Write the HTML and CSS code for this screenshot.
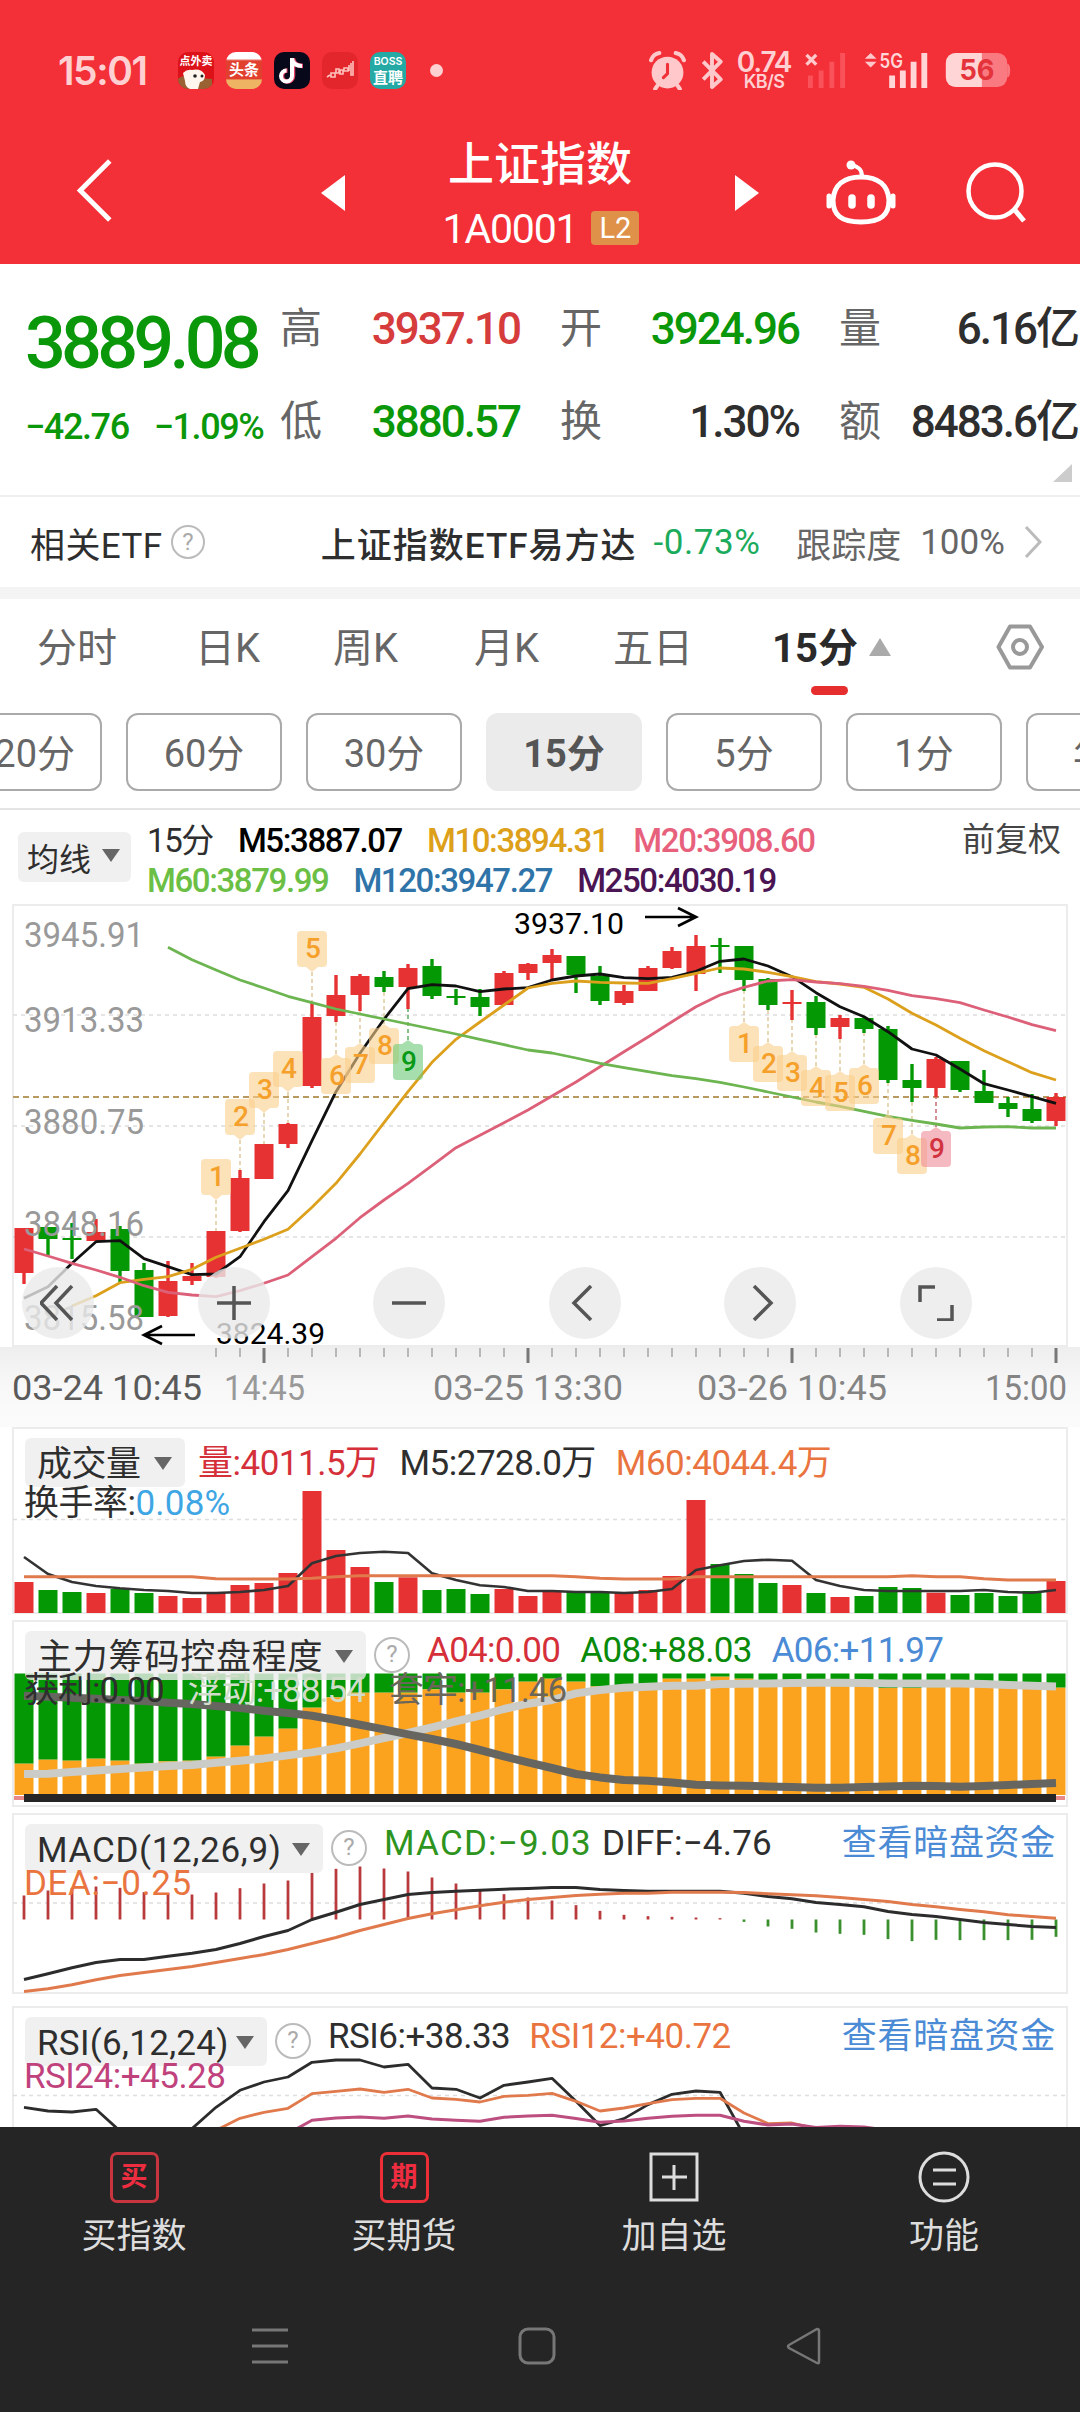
FILE: index.html
```html
<!DOCTYPE html>
<html lang="zh-CN">
<head>
    <meta charset="UTF-8">
    <meta name="viewport" content="width=device-width, initial-scale=1.0">
    <title>上证指数 1A0001</title>
    <link rel="stylesheet" href="styles.css">
</head>
<body>
    <header class="top">
        <div class="status">
            <div class="status-left">
                <span class="clock">15:01</span>
                <span class="app app-food"><b>点外卖</b><svg viewBox="0 0 36 22"><path d="M0 22V12q4-4 8-2l26 2v10z" fill="#9a6232"/><path d="M5 6q4-4 9-3 9-2 13 5 0 6-5 7l-2 7h-8q-5-2-5-8z" fill="#fff6ee"/><circle cx="17" cy="9" r="1.800" fill="#222"/><circle cx="24" cy="9" r="1.500" fill="#222"/></svg></span>
                <span class="app app-news"><b>头条</b></span>
                <span class="app app-tok"><svg viewBox="0 0 36 36"><path d="M19 6v18a5.500 5.500 0 1 1-5.500-5.500M19 7c1 5 5 7 10 7" fill="none" stroke="#e9436a" stroke-width="4.500"/><path d="M18 6v18a5.500 5.500 0 1 1-5.500-5.500M18 7c1 5 5 7 10 7" fill="none" stroke="#fff" stroke-width="4"/></svg></span>
                <span class="app app-line"><svg viewBox="0 0 36 36"><path d="M5 25l3-2M9 21h4v4H9zM14 17h3v4h-3zM18 18h3v4h-3zM22 16h4v3h-4zM27 13v6M31 9v14h-2V11" fill="none" stroke="#ffc2bd" stroke-width="1.600"/></svg></span>
                <span class="app app-boss"><b>BOSS</b><b class="zh">直聘</b></span>
                <span class="dot"></span>
            </div>
            <div class="status-right">
                <svg class="alarm" viewBox="0 0 36 38"><circle cx="18" cy="21" r="15.500" fill="#ffc9cb"/><path d="M2 9Q4 3 10 2M34 9Q32 3 26 2M8 34l-2 3M28 34l2 3" stroke="#ffc9cb" stroke-width="4" fill="none" stroke-linecap="round"/><path d="M18 13v9l-4 4" stroke="#f12f39" stroke-width="3" fill="none" stroke-linecap="round"/></svg>
                <svg class="bt" viewBox="0 0 24 40"><path d="M3 11l18 18-9 8V3l9 8L3 29" fill="none" stroke="#ffc9cb" stroke-width="4" stroke-linejoin="round"/></svg>
                <span class="speed"><b>0.74</b><small>KB/S</small></span>
                <svg class="sig" viewBox="0 0 44 40"><path d="M2 4l10 10M12 4L2 14" stroke="#ffc9cb" stroke-width="3.500"/><path d="M6 38V25M17 38V20M28 38V11M39 38V2" stroke="#f9525a" stroke-width="5"/></svg>
                <svg class="sig5" viewBox="0 0 66 40"><path d="M0 8l6-6 6 6zM0 11l6 6 6-6z" fill="#ffc9cb"/><text x="15" y="17" textLength="24" lengthAdjust="spacingAndGlyphs">5G</text><path d="M28 38V25M39 38V20M50 38V11M61 38V2" stroke="#ffd5d6" stroke-width="6"/></svg>
                <svg class="bat" viewBox="0 0 66 38"><rect y="1" width="63" height="35" rx="10" fill="#f97b81"/><path d="M10 1h27v35H10A10 10 0 0 1 0 26V11A10 10 0 0 1 10 1z" fill="#ffd5d6"/><path d="M63 12q3 0 3 7t-3 7z" fill="#f97b81"/><text x="14" y="29" textLength="36" lengthAdjust="spacingAndGlyphs">56</text></svg>
            </div>
        </div>
        <div class="title-bar">
            <svg class="back" viewBox="0 0 38 66"><path d="M34 3L4 33l30 30" fill="none" stroke="#fff" stroke-width="5"/></svg>
            <svg class="prev" viewBox="0 0 24 36"><path d="M24 0v36L0 18z" fill="#fff"/></svg>
            <div class="title">
                <h1>上证指数</h1>
                <div class="code"><span>1A0001</span><em>L2</em></div>
            </div>
            <svg class="next" viewBox="0 0 24 36"><path d="M0 0v36l24-18z" fill="#fff"/></svg>
            <svg class="robot" viewBox="0 0 70 66"><g fill="none" stroke="#fff" stroke-width="5"><path d="M35 17c18 0 27 9 28 23 0 15-8 22-28 22S7 55 7 40c1-14 10-23 28-23z"/><path d="M36 16c0-7-4-9-10-11" stroke-width="4"/><path d="M3 36v10M67 36v10" stroke-linecap="round"/><path d="M26 38v7M45 38v7" stroke-width="7.500" stroke-linecap="round"/></g><circle cx="25" cy="5" r="4.500" fill="#fff"/></svg>
            <svg class="search" viewBox="0 0 62 64"><circle cx="30" cy="29" r="26.500" fill="none" stroke="#fff" stroke-width="4.500"/><path d="M49 47l10 12" stroke="#fff" stroke-width="5"/></svg>
        </div>
    </header>

    <section class="quote">
        <div class="price">
            <strong>3889.08</strong>
            <div class="change"><span>−42.76</span><span>−1.09%</span></div>
        </div>
        <dl class="facts">
            <dt>高</dt><dd class="up">3937.10</dd>
            <dt>开</dt><dd class="down">3924.96</dd>
            <dt>量</dt><dd>6.16亿</dd>
            <dt>低</dt><dd class="down">3880.57</dd>
            <dt>换</dt><dd>1.30%</dd>
            <dt>额</dt><dd>8483.6亿</dd>
        </dl>
        <i class="corner"></i>
    </section>

    <section class="etf">
        <span class="etf-label">相关ETF</span>
        <span class="help">?</span>
        <b class="etf-name">上证指数ETF易方达</b>
        <span class="etf-rate">-0.73%</span>
        <span class="etf-track">跟踪度</span>
        <span class="etf-pct">100%</span>
        <svg viewBox="0 0 18 34"><path d="M2 2l14 15L2 32" fill="none" stroke="#bbb" stroke-width="3"/></svg>
    </section>

    <nav class="tabs">
        <span>分时</span><span>日K</span><span>周K</span><span>月K</span><span>五日</span>
        <span class="active">15分</span>
        <i class="tri-up"></i>
        <svg viewBox="0 0 48 46"><g fill="none" stroke="#999" stroke-width="4"><path d="M14 2.500h20L46 23 34 43.500H14L2.500 23z" stroke-linejoin="round"/><circle cx="24" cy="23" r="7"/></g></svg>
    </nav>
    <div class="chips">
        <span>120分</span><span>60分</span><span>30分</span><span class="on">15分</span><span>5分</span><span>1分</span><span>年K</span>
    </div>

    <section class="ma">
        <div class="picker">均线<i></i></div>
        <div class="ma-rows">
            <div><span>15分</span><span class="c-black">M5:3887.07</span><span class="c-gold">M10:3894.31</span><span class="c-pink">M20:3908.60</span></div>
            <div><span class="c-lime">M60:3879.99</span><span class="c-blue">M120:3947.27</span><span class="c-purple">M250:4030.19</span></div>
        </div>
        <span class="adjust">前复权</span>
    </section>

    <section class="kline">
        <svg id="kline" viewBox="0 0 1080 527"></svg>
        <div class="tools">
            <button><svg viewBox="0 0 36 36"><path d="M17 1L1 18l16 17M32 1L16 18l16 17"/></svg></button>
            <button><svg viewBox="0 0 36 36"><path d="M18 1v34M1 18h34"/></svg></button>
            <button><svg viewBox="0 0 36 36"><path d="M1 18h34"/></svg></button>
            <button><svg viewBox="0 0 36 36"><path d="M24 1L7 18l17 17"/></svg></button>
            <button><svg viewBox="0 0 36 36"><path d="M12 1l17 17-17 17"/></svg></button>
            <button><svg viewBox="0 0 36 36"><path d="M2 17V2h15M19 35h15V20"/></svg></button>
        </div>
    </section>

    <section class="panel">
        <svg id="volume" viewBox="0 0 1080 193"></svg>
        <div class="panel-head head-vol">
            <div class="picker">成交量<i></i></div>
            <span class="c-red">量:4011.5万</span>
            <span>M5:2728.0万</span>
            <span class="c-orange">M60:4044.4万</span>
        </div>
        <div class="panel-sub sub-vol"><span>换手率:</span><span class="c-sky">0.08%</span></div>
    </section>

    <section class="panel">
        <svg id="control" viewBox="0 0 1080 193"></svg>
        <div class="panel-head head-control">
            <div class="picker">主力筹码控盘程度<i></i></div>
            <span class="help">?</span>
            <span class="c-red">A04:0.00</span>
            <span class="c-green">A08:+88.03</span>
            <span class="c-blue2">A06:+11.97</span>
        </div>
        <div class="panel-sub sub-control"><span>获利:0.00</span><span class="c-light">浮动:+88.54</span><span class="c-grey">套牢:+11.46</span></div>
    </section>

    <section class="panel">
        <svg id="macd" viewBox="0 0 1080 193"></svg>
        <div class="panel-head head-macd">
            <div class="picker">MACD(12,26,9)<i></i></div>
            <span class="help">?</span>
            <span class="c-leaf">MACD:−9.03</span>
            <span class="diff">DIFF:−4.76</span>
            <a>查看暗盘资金</a>
        </div>
        <div class="panel-sub sub-macd"><span class="c-orange">DEA:−0.25</span></div>
    </section>

    <section class="panel last">
        <svg id="rsi" viewBox="0 0 1080 193"></svg>
        <div class="panel-head head-rsi">
            <div class="picker">RSI(6,12,24)<i></i></div>
            <span class="help">?</span>
            <span>RSI6:+38.33</span>
            <span class="c-orange">RSI12:+40.72</span>
            <a>查看暗盘资金</a>
        </div>
        <div class="panel-sub"><span class="c-magenta">RSI24:+45.28</span></div>
    </section>

    <footer class="bottom">
        <div class="actions">
            <div><span class="box">买</span>买指数</div>
            <div><span class="box bright">期</span>买期货</div>
            <div><svg viewBox="0 0 52 52"><path d="M3 3h46v46H3zM26 14v25M14 26h25" fill="none" stroke="#ddd" stroke-width="3"/></svg>加自选</div>
            <div><svg viewBox="0 0 52 52"><circle cx="26" cy="26" r="24" fill="none" stroke="#ddd" stroke-width="3"/><path d="M15 19h23M15 33h23" stroke="#ddd" stroke-width="3"/></svg>功能</div>
        </div>
        <div class="sysbar">
            <svg viewBox="0 0 38 38"><path d="M1 3h36M1 19h36M1 35h36" stroke="#777" stroke-width="3"/></svg>
            <svg viewBox="0 0 38 38"><rect x="2" y="2" width="34" height="34" rx="8" fill="none" stroke="#777" stroke-width="3"/></svg>
            <svg viewBox="0 0 38 38"><path d="M34 4v31q0 2-2 1L4 21q-2-2 0-3L32 2q2 0 2 2z" fill="none" stroke="#777" stroke-width="2.500"/></svg>
        </div>
    </footer>
    <script src="chart.js"></script>
</body>
</html>
```
FILE: styles.css
```css
* { box-sizing: border-box; }
body {
    margin: 0;
    width: 1080px;
    height: 2412px;
    overflow: hidden;
    background: #fff;
    color: #2e2e2e;
    font-family: Roboto, "Noto Sans CJK SC", sans-serif;
    display: flex;
    flex-direction: column;
}
body > * { flex: none; }
svg { display: block; }
h1, dl, dd { margin: 0; }
em, i { font-style: normal; }

/* header */
.top { background: #f32f38; height: 264px; color: #fff; }
.status {
    display: flex;
    justify-content: space-between;
    height: 126px;
    padding: 52px 69px 0 58px;
    color: #ffd0d2;
    font-family: Inter, "Noto Sans CJK SC", sans-serif;
}
.status-left, .status-right { display: flex; align-items: center; height: 37px; }
.clock { font-size: 39px; font-weight: 600; width: 120px; letter-spacing: -1.4px; }
.app {
    width: 36px;
    height: 37px;
    margin-right: 12px;
    border-radius: 10px;
    overflow: hidden;
    color: #fff;
    font-size: 10.5px;
    line-height: 1;
    text-align: center;
    white-space: nowrap;
}
.app b { display: block; }
.app-food { background: #dc1218; }
.app-food b { padding-top: 4px; font-size: 11px; }
.app-news { background: linear-gradient(#fff 18%, #e2402f 24% 72%, #efb463 76%); }
.app-news b { padding-top: 10px; font-size: 15px; }
.app-tok { background: #07081a; }
.app-line { background: #e3262b; }
.app-boss { background: #25a9a4; }
.app-boss b { padding-top: 5px; font-weight: 600; }
.app-boss .zh { padding-top: 2px; font-size: 15px; font-weight: 700; }
.dot { width: 13px; height: 13px; border-radius: 50%; background: #ffd0d2; margin-left: 12px; }
.alarm { width: 37px; height: 39px; }
.bt { width: 24px; height: 39px; margin-left: 14px; }
.speed { width: 58px; margin-left: 11px; text-align: center; line-height: 1; }
.speed b { display: block; font-size: 28px; font-weight: 600; letter-spacing: -1.2px; height: 22px; line-height: 20px; }
.speed small { display: block; font-size: 18px; font-weight: 600; height: 16px; line-height: 16px; letter-spacing: -.6px; }
.sig { width: 44px; height: 39px; margin-left: 11px; }
.sig5 { width: 66px; height: 39px; margin-left: 16px; }
.bat { width: 66px; height: 37px; margin-left: 15px; }
.sig5 text { font: 600 20px Inter, sans-serif; fill: #ffd5d6; }
.bat text { font: 700 29px Inter, sans-serif; fill: #e5333c; }
.title-bar { display: flex; align-items: flex-start; padding-left: 76px; }
.back { width: 38px; height: 65px; margin-top: 32px; }
.prev { width: 24px; height: 36px; margin: 49px 0 0 207px; }
.title { width: 390px; text-align: center; }
.title h1 { font-size: 46px; font-weight: 500; line-height: 50px; margin-top: 13px; }
.code { display: flex; justify-content: center; align-items: center; height: 40px; margin-top: 20px; padding-left: 2px; gap: 14px; }
.code span { font-size: 41px; font-weight: 450; letter-spacing: -1.2px; }
.code em { background: #e09149; width: 48px; height: 34px; border-radius: 4px; font-size: 29px; line-height: 35px; margin-top: -3px; }
.next { width: 24px; height: 36px; margin-top: 49px; }
.robot { width: 70px; height: 66px; margin: 34px 0 0 67px; }
.search { width: 62px; height: 64px; margin: 36px 0 0 69px; }

/* quote */
.quote { position: relative; display: flex; height: 233px; border-bottom: 2px solid #f0f0f0; }
.price { width: 280px; padding: 42px 0 0 25px; color: #0a970a; white-space: nowrap; }
.price strong { display: block; font-size: 72px; line-height: 76px; font-weight: 500; letter-spacing: -4.8px; }
.change { display: flex; gap: 25px; font-size: 36px; font-weight: 500; letter-spacing: -1.4px; line-height: 40px; margin-top: 25px; }
.facts { display: grid; grid-template-columns: 42px 198px 40px 42px 197px 40px 42px 197px; grid-template-rows: 93px 93px; padding-top: 18px; white-space: nowrap; }
.facts dt { font-size: 42px; line-height: 94px; color: #666; }
.facts dd { font-size: 44px; line-height: 94px; font-weight: 500; letter-spacing: -2px; text-align: right; }
.facts dt:nth-of-type(3n+2) { grid-column: 4; }
.facts dt:nth-of-type(3n) { grid-column: 7; }
.facts .up { color: #d63c3c; }
.facts .down { color: #0a970a; }
.corner { position: absolute; right: 8px; bottom: 13px; border-left: 19px solid transparent; border-bottom: 18px solid #ccc; }
.help { flex: none; width: 34px; height: 34px; border: 2.5px solid #bbb; border-radius: 50%; color: #aaa; font-size: 24px; line-height: 30px; text-align: center; letter-spacing: 0; }
.etf { display: flex; align-items: center; height: 102px; padding: 0 38px 0 30px; border-bottom: 12px solid #f4f4f4; font-size: 35px; white-space: nowrap; }
.etf-label { width: 141px; letter-spacing: .4px; }
.etf-name { width: 333px; margin-left: 116px; font-weight: 500; letter-spacing: 1px; }
.etf-rate { width: 143px; color: #1bab5c; letter-spacing: .6px; }
.etf-track { width: 124px; color: #666; }
.etf-pct { width: 104px; color: #666; }
.etf svg { width: 18px; height: 34px; }

/* period tabs */
.tabs { display: flex; height: 114px; padding-left: 37px; font-size: 40px; line-height: 100px; color: #666; white-space: nowrap; }
.tabs span:nth-child(1) { width: 158px; }
.tabs span:nth-child(2) { width: 138px; }
.tabs span:nth-child(3) { width: 141px; }
.tabs span:nth-child(4) { width: 139px; }
.tabs span:nth-child(5) { width: 159px; }
.tabs .active { position: relative; width: 86px; font-weight: 700; color: #2a2a2a; }
.tabs .active::after { content: ""; position: absolute; left: 39px; top: 87px; width: 37px; height: 9px; border-radius: 5px; background: #e62e2e; }
.tri-up { height: 18px; margin: 39px 0 0 11px; border: 11px solid transparent; border-top: 0; border-bottom: 18px solid #aaa; }
.tabs svg { width: 48px; height: 46px; margin: 25px 0 0 105px; }
.chips { display: flex; justify-content: center; gap: 24px; height: 97px; padding-left: 48px; overflow: hidden; border-bottom: 2px solid #e4e4e4; }
.chips span { flex: none; width: 156px; height: 78px; border: 2px solid #aaa; border-radius: 12px; text-align: center; font-size: 38px; line-height: 78px; color: #666; }
.chips .on { background: #ebebeb; border-color: #ebebeb; font-weight: 700; color: #555; }

/* moving averages */
.ma { display: flex; height: 90px; padding-left: 18px; font-size: 33px; white-space: nowrap; }
.picker { display: flex; flex: none; align-items: center; justify-content: space-between; height: 49px; padding: 5px 13px 0 12px; border-radius: 6px; background: rgba(236, 236, 236, .8); }
.picker i { border: 9px solid transparent; border-bottom: 0; border-top: 13px solid #666; margin-top: -4px; }
.ma .picker { width: 113px; height: 50px; margin-top: 22px; padding: 0 11px 0 9px; font-size: 32px; }
.ma-rows { padding: 10px 0 0 16px; letter-spacing: -1.4px; }
.ma-rows div { display: flex; gap: 25px; height: 40px; line-height: 41px; font-weight: 500; }
.ma-rows div:first-child span:first-child { font-weight: 400; }
.adjust { margin-left: auto; padding-right: 19px; line-height: 60px; color: #444; }

/* charts */
.kline { position: relative; height: 527px; }
.kline > svg, .panel > svg { width: 1080px; }
.tools { position: absolute; left: 22px; top: 367px; display: flex; gap: 103.6px; }
.tools button { width: 72px; height: 72px; padding: 18px; border: 0; border-radius: 50%; background: rgba(234, 234, 234, .8); }
.tools path { fill: none; stroke: #555; stroke-width: 3.5; }
.panel { position: relative; height: 193px; font-size: 35px; white-space: nowrap; }
.panel.last { height: 121px; overflow: hidden; }
.panel-head { position: absolute; left: 25px; top: 11px; right: 25px; display: flex; height: 49px; line-height: 39px; letter-spacing: -.5px; }
.panel-head .picker { line-height: 42px; }
.panel-head .help { margin: 6px 0 0 8px; width: 36px; height: 36px; line-height: 31px; }
.panel-head a { margin-left: auto; color: #4b8bd6; letter-spacing: .7px; margin-right: -1px; }
.panel-sub { position: absolute; left: 24px; top: 48px; display: flex; line-height: 46px; letter-spacing: -.5px; }

.head-vol { gap: 20px; line-height: 51px; }
.head-vol .picker { width: 160px; margin-right: -7px; }
.sub-vol { top: 54px; }
.sub-vol .c-sky { letter-spacing: .2px; }
.head-control { gap: 20px; letter-spacing: -.7px; }
.head-control .picker { width: 341px; margin-right: -20px; letter-spacing: .8px; }
.head-control .help { margin-right: -3px; }
.sub-control { gap: 24px; letter-spacing: -1px; top: 48px; }
.head-macd { gap: 14px; letter-spacing: 1.2px; }
.head-macd .picker { width: 298px; margin-right: -14px; letter-spacing: .7px; }
.head-macd .help { margin-right: 3px; }
.head-macd .diff { letter-spacing: .2px; margin-left: -4px; }
.sub-macd { letter-spacing: .6px; }
.head-rsi { gap: 19px; letter-spacing: -.5px; }
.head-rsi .picker { width: 242px; margin-right: -19px; letter-spacing: .3px; }
.head-rsi .help { margin-right: -2px; }

.c-black { color: #000; }
.c-gold { color: #dda01a; }
.c-pink { color: #e8617c; }
.c-lime { color: #6cbf45; }
.c-blue { color: #2f74a8; }
.c-purple { color: #4b1453; }
.c-red { color: #d5303a; }
.c-orange { color: #ea7440; }
.c-sky { color: #3fa6e4; }
.c-green { color: #0a8a0a; }
.c-blue2 { color: #4b8bd6; }
.c-leaf { color: #2e9420; }
.c-magenta { color: #c0427d; }
.c-light { color: #d2dccb; }
.c-grey { color: #6b665a; }

/* svg text */
.axis { font: 450 35px Roboto, sans-serif; fill: #999; }
.mark { font: 400 29px Roboto, sans-serif; fill: #000; }
.tag { font: 500 28px Roboto, sans-serif; text-anchor: middle; }

/* bottom */
.bottom { height: 285px; background: #252525; color: #ddd; }
.actions { display: grid; grid-template-columns: repeat(4, 270px); height: 166px; padding-top: 24px; font-size: 35px; line-height: 42px; margin-left: -1px; }
.actions div { display: flex; flex-direction: column; align-items: center; gap: 13px; }
.actions svg { width: 52px; height: 52px; }
.box { width: 49px; height: 51px; margin-top: 1px; border: 3px solid #c9353f; border-radius: 7px; color: #ef2d40; font-size: 27px; font-weight: 700; line-height: 44px; text-align: center; }
.bright { border-color: #ec2f36; }
.sysbar { display: flex; justify-content: space-between; padding: 34px 257px 0 251px; }
.sysbar svg { width: 38px; height: 38px; }
```
FILE: chart.js
```js
const STEP = 24, BAR = 19;
const RED = "#e63232", GREEN = "#049804";
const px = i => STEP + i * STEP;

const el = {};
["kline", "volume", "control", "macd", "rsi"].forEach(id => el[id] = document.getElementById(id));

const rect = (x, y, w, h, fill) => `<rect x="${x}" y="${y}" width="${w}" height="${h}" fill="${fill}"/>`;
const bar = (i, y1, y2, fill) => rect(px(i) - BAR / 2, y1.toFixed(1), BAR, (y2 - y1).toFixed(1), fill);
const seg = (x1, y1, x2, y2, color, w = 2, dash = "") =>
    `<path d="M${x1} ${y1}L${x2} ${y2}" stroke="${color}" stroke-width="${w}"${dash ? ` stroke-dasharray="${dash}"` : ""}/>`;
const text = (cls, x, y, w, str, fill) =>
    `<text class="${cls}" x="${x}" y="${y}" textLength="${w}" lengthAdjust="spacingAndGlyphs"${fill ? ` style="fill:${fill}"` : ""}>${str}</text>`;

// ys are thirds of a pixel, from is the first bar, top is the panel offset
function line(ys, color, w, from = 0, top = 0) {
    const pts = ys.map((y, i) => `${px(from + i)},${(y / 3 - top).toFixed(1)}`);
    return `<polyline points="${pts.join(" ")}" fill="none" stroke="${color}" stroke-width="${w}" stroke-linejoin="round"/>`;
}
const frame = (y, h) => `<rect x="13" y="${y}" width="1054" height="${h}" fill="none" stroke="#ececec" stroke-width="2"/>`;
const grid = y => seg(13, y, 1066, y, "#ddd", 1.5, "4 4");

// color, high, body top, body bottom, low
const candles = [
    ["r",328,328,373,384],["g",327,327,339,355],["g",323,338,340,359],["r",319,332,341,341],["g",326,329,371,382],
    ["g",363,370,417,417],["r",361,381,416,417],["r",363,376,381,385],["r",331,331,377,378],["r",270,278,331,332],
    ["r",244,244,279,279],["r",223,224,244,248],["r",102,117,186,188],["r",75,95,116,122],["r",74,76,95,111],
    ["g",71,77,87,92],["r",64,68,87,109],["g",59,66,96,99],["g",89,96,98,105],["g",89,97,107,116],
    ["r",71,73,105,105],["r",63,64,73,80],["r",49,55,63,80],["g",56,56,75,93],["g",66,76,101,105],
    ["r",85,91,103,105],["r",66,68,91,91],["r",47,51,68,69],["r",35,46,74,91],["g",38,45,47,73],
    ["g",46,46,80,91],["g",78,79,105,110],["r",90,102,104,120],["g",96,102,128,135],["r",115,118,127,139],
    ["g",116,118,129,133],["g",126,129,180,183],["g",164,180,188,202],["r",157,159,188,197],["g",161,161,190,192],
    ["g",170,191,203,203],["g",197,203,209,217],["g",194,209,221,223],["r",193,197,221,226]
];
const ma5 = [1195,1160,1090,1025,1022,1076,1100,1124,1122,1070,965,872,722,575,460,358,266,254,258,275,267,263,240,228,222,233,236,232,214,184,177,198,230,278,320,350,395,447,465,507,551,570,590,610];
const ma10 = [1218,1187,1148,1138,1130,1108,1072,1045,1018,988,922,850,762,668,575,487,418,366,315,264,250,243,247,249,250,236,220,204,207,217,230,245,252,262,297,340,375,415,452,485,518,540];
const ma20 = [1047,1068,1090,1110,1132,1157,1177,1185,1190,1172,1150,1125,1070,1015,953,900,850,797,743,706,668,630,588,546,500,455,411,365,320,285,262,243,239,246,251,259,271,287,296,308,330,351,374,392];
const ma60 = [142,179,210,240,264,289,308,327,342,357,372,387,402,418,434,450,459,474,490,503,515,527,536,547,561,576,591,606,619,634,649,661,672,684,681,680,684,684];

// bar, label, tag edge, candle edge, direction (1 = tag above the candle)
const tags = [
    [8,1,259,331,1],[9,2,199,270,1],[10,3,172,244,1],[11,4,151,223,1],[12,5,31,102,1],
    [13,6,154,122,0],[14,7,143,111,0],[15,8,124,92,0],[16,9,140,109,0,"g"],
    [30,1,122,91,0],[31,2,142,110,0],[32,3,151,120,0],[33,4,166,135,0],[34,5,171,139,0],[35,6,164,133,0],
    [36,7,214,183,0],[37,8,234,202,0],[38,9,227,197,0,"r"]
];

function drawKline() {
    let s = `<defs><linearGradient id="fade" x2="0" y2="1"><stop stop-color="#eeeeee"/><stop offset=".5" stop-color="#f8f8f8"/><stop offset="1" stop-color="#fbfbfb"/></linearGradient></defs>`;
    s += rect(0, 447, 1080, 80, "url(#fade)") + frame(5, 441);
    s += [115, 226, 337].map(grid).join("");
    s += seg(13, 197, 1066, 197, "#b89a60", 1.8, "6 4");
    candles.forEach(([c, hi, a, b, lo], i) => {
        const color = c === "r" ? RED : GREEN;
        s += seg(px(i), hi, px(i), lo, color, 3.4) + bar(i, a, b, color);
    });
    tags.forEach(([i, , y, edge, above, kind]) => {
        const x = px(i);
        s += seg(x, above ? y + 41 : y, x, edge, kind === "g" ? "#5fae62" : kind === "r" ? "#c76b74" : "#dfca9c", 1.5, "4 3");
    });
    s += line(ma5, "#111", 2.8) + line(ma10, "#dca01c", 2.8, 2) + line(ma20, "#dd6079", 2.8) + line(ma60, "#6cb550", 2.8, 6);
    tags.forEach(([i, label, y, , above, kind]) => {
        const x = px(i), top = above ? y : y + 4;
        const bg = kind === "g" ? "#6ccb78" : kind === "r" ? "#f08c98" : "#fbcf8c";
        const fg = kind === "g" ? "#089a16" : kind === "r" ? "#d23340" : "#f5a02a";
        const tip = above ? `M${x - 6} ${y + 36}h12l-6 5z` : `M${x - 6} ${y + 4}h12l-6-4z`;
        s += `<g fill="${bg}" opacity=".6"><rect x="${x - 15}" y="${top}" width="30" height="36" rx="4"/><path d="${tip}"/></g>`;
        s += `<text class="tag" x="${x + 1}" y="${top + 27}" style="fill:${fg}">${label}</text>`;
    });
    [["3945.91",47],["3913.33",132],["3880.75",234],["3848.16",336],["3815.58",430]].forEach(([t, y]) => s += text("axis", 24, y, 120, t));
    s += text("mark", 514, 34, 110, "3937.10") + text("mark", 216, 444, 109, "3824.39");
    s += `<path d="M645 17h51M678 8l18 9-18 9M195 435h-50M162 426l-18 9 18 9" fill="none" stroke="#000" stroke-width="2.700"/>`;
    for (let i = 8; i < 44; i++) {
        const major = i % 11 === 10;
        s += seg(px(i), 448, px(i), major ? 463 : 457, major ? "#777" : "#999", major ? 3 : 1.3);
    }
    s += text("axis", 12, 500, 190, "03-24 10:45", "#5a5a5a") + text("axis", 224, 500, 81, "14:45");
    s += text("axis", 433, 500, 190, "03-25 13:30", "#848484") + text("axis", 697, 500, 190, "03-26 10:45", "#848484") + text("axis", 985, 500, 82, "15:00", "#848484");
    el.kline.innerHTML = s;
}

function drawVolume() {
    const colors = "rggrggrrrrrrrrrgrgggrrrggrrrrgggrgrgggrggggr";
    const tops = [486,510,516,519,507,519,528,534,519,495,489,459,213,390,441,486,472,510,507,522,507,528,516,516,519,518,510,468,240,432,462,489,495,519,531,528,501,504,518,525,519,528,513,483];
    const m5 = [411,462,486,498,505,510,513,519,519,516,510,498,430,408,399,395,399,460,480,496,501,513,513,516,516,519,516,507,450,436,423,419,422,480,498,510,513,513,513,513,510,516,518,510];
    const m60 = [470,470,470,470,470,470,470,470,476,477,477,477,475,470,467,467,467,467,467,467,467,467,467,470,475,477,477,477,470,470,470,470,470,470,470,470,470,467,470,470,476,480,480,480];
    let s = frame(1, 185) + grid(92.5);
    tops.forEach((t, i) => s += bar(i, t / 3 - 7, 186, colors[i] === "r" ? RED : GREEN));
    el.volume.innerHTML = s + line(m5, "#333", 2.6, 0, 7) + line(m60, "#e07a4c", 3, 0, 7);
}

function drawControl() {
    const TOP = 199.3;
    const split = [1029,1017,1020,1014,1020,1029,1022,1020,1008,975,948,924,861,830,816,816,816,806,816,816,806,783,774,783,797,797,795,774,774,768,774,782,790,795,797,798,802,802,800,798,795,797,800,801];
    const light = [1060,1059,1054,1049,1045,1040,1036,1033,1026,1020,1013,1004,995,983,968,952,937,920,902,885,865,849,838,818,808,801,798,795,795,790,789,788,787,786,786,787,788,788,788,788,790,793,795,797];
    const dark = [825,828,831,834,838,841,846,850,856,862,870,877,885,898,912,926,941,955,970,988,1007,1025,1042,1060,1070,1078,1080,1085,1092,1094,1095,1097,1099,1101,1101,1099,1097,1095,1096,1098,1096,1093,1090,1087];
    let s = frame(1, 185);
    split.forEach((t, i) => {
        const y = t / 3 - TOP;
        s += bar(i, 53.5, y, GREEN) + bar(i, y, 175, "#fba31f");
    });
    s += line(light, "#cbcbc8", 8, 0, TOP) + line(dark, "#666560", 8, 0, TOP);
    s += rect(14, 176, 10, 4, "#e98a8a") + rect(1056, 176, 9, 4, "#e98a8a") + rect(24, 174, 1032, 8, "#262626");
    el.control.innerHTML = s;
}

function drawMacd() {
    const ends = [285,270,262,258,262,275,280,282,276,263,249,240,217,205,198,204,213,231,249,268,281,291,300,314,331,343,347,349,351,353,364,378,385,396,400,403,416,422,418,419,419,419,418,409];
    const diff = [537,520,502,486,477,477,467,458,447,429,408,390,357,335,312,297,282,276,272,269,266,264,261,261,267,270,272,272,272,272,278,288,295,306,312,319,333,342,348,357,366,372,378,381];
    const dea = [573,565,553,538,525,516,507,498,486,474,462,447,429,411,390,372,354,340,328,316,305,297,291,285,281,278,278,275,275,275,276,280,283,286,291,297,303,312,319,327,334,343,348,353];
    let s = frame(1, 179) + grid(90);
    ends.forEach((y, i) => s += seg(px(i), 106.5, px(i), y / 3 - 12.5, y < 357 ? "#b93a3c" : "#3a8f2e", 2.8));
    el.macd.innerHTML = s + line(diff, "#2c2c2c", 3, 0, 12.5) + line(dea, "#e07a4c", 3, 0, 12.5);
}

function drawRsi() {
    const r6 = [921,932,935,927,992,1060,1040,985,921,870,845,830,786,779,779,800,792,863,867,893,855,845,834,903,976,955,913,882,872,876,1005];
    const r12 = [990,954,936,924,880,873,866,876,867,893,897,905,888,885,879,903,932,923,910,898,894,894,938,970,968,985];
    const r24 = [1000,960,953,950,954,947,956,960,963,951,947,945,955,966,962,954,948,945,945,963,974,971,982,978,980,990];
    el.rsi.innerHTML = frame(1, 185) + grid(89.5) + line(r6, "#2c2c2c", 2.8, 0, 205.7) + line(r12, "#e07a4c", 2.8, 8, 205.7) + line(r24, "#bd4e80", 3, 11, 205.7);
}

drawKline();
drawVolume();
drawControl();
drawMacd();
drawRsi();
```
